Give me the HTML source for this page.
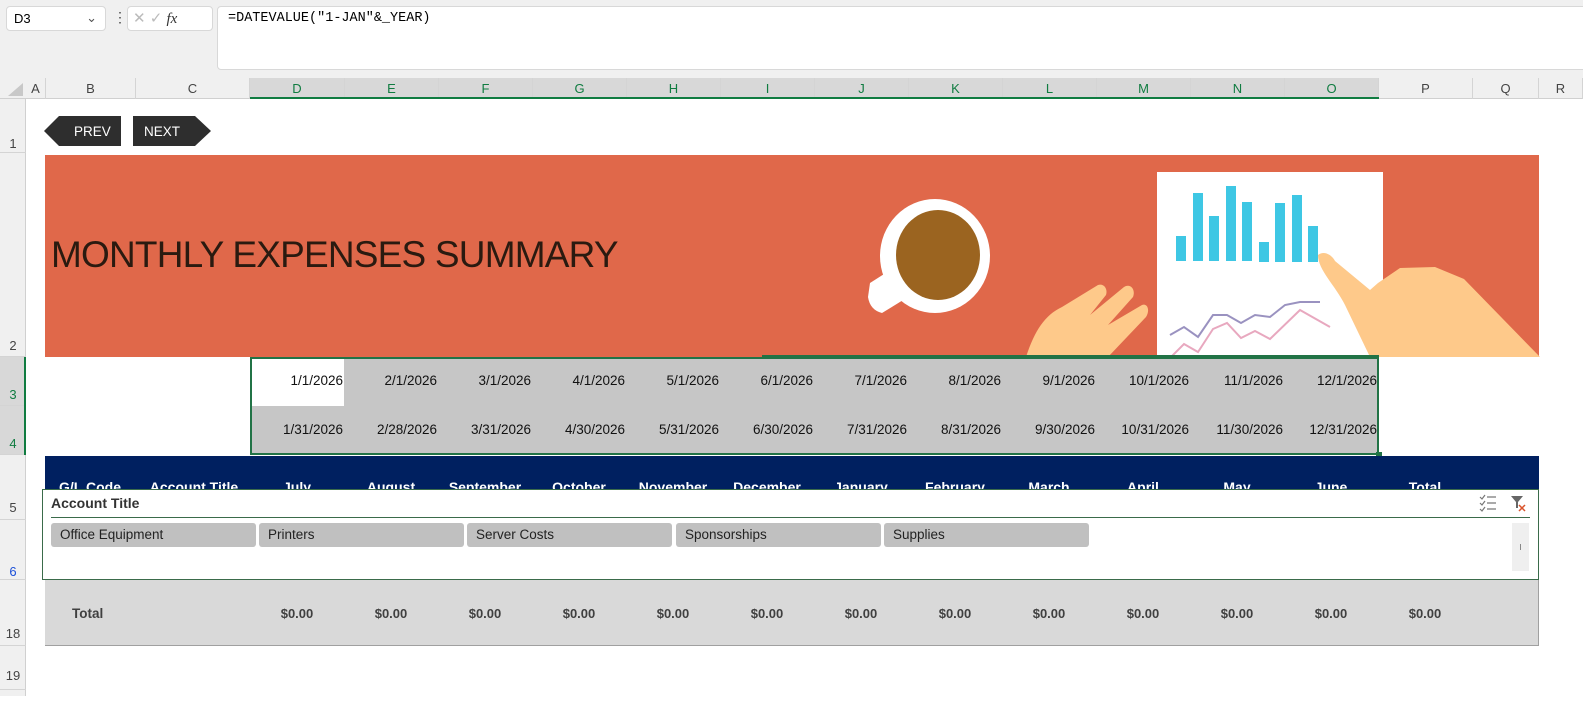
<!DOCTYPE html>
<html><head><style>
*{margin:0;padding:0;box-sizing:border-box}
body{width:1583px;height:696px;overflow:hidden;background:#fff;font-family:"Liberation Sans",sans-serif;position:relative}
.a{position:absolute}
.ch{position:absolute;top:78px;height:21px;font-size:13px;color:#444;text-align:center;line-height:21px;border-right:1px solid #d4d4d4}
.rh{position:absolute;left:0;width:26px;font-size:13px;color:#444;text-align:center;border-bottom:1px solid #d4d4d4}
.dt{position:absolute;font-size:13.5px;color:#111;text-align:right;width:94px}
.mh{position:absolute;top:479px;font-size:14px;font-weight:bold;color:#fff;text-align:center;width:94px}
.tv{position:absolute;top:606px;font-size:13px;font-weight:bold;color:#404040;text-align:center;width:94px}
.btn{position:absolute;top:523px;height:24px;width:205px;background:#c0c0c0;border-radius:3px;font-size:13.5px;color:#222;padding:4px 9px}
</style></head><body>
<div class="a" style="left:0;top:0;width:1583px;height:78px;background:#f0f0f0"></div>
<div class="a" style="left:6px;top:6px;width:100px;height:25px;background:#fff;border:1px solid #d8d8d8;border-radius:4px;font-size:13px;padding:4px 7px">D3<span style="position:absolute;right:8px;top:3px;color:#555">&#8964;</span></div>
<div class="a" style="left:113px;top:9px;font-size:14px;color:#444">&#8942;</div>
<div class="a" style="left:127px;top:6px;width:86px;height:25px;background:#fff;border:1px solid #d8d8d8;border-radius:4px;font-size:15px;color:#bbb;padding:2px 5px">✕ ✓ <i style="color:#333;font-family:'Liberation Serif',serif">fx</i></div>
<div class="a" style="left:217px;top:6px;width:1380px;height:64px;background:#fff;border:1px solid #d8d8d8;border-radius:4px;font-family:'Liberation Mono',monospace;font-size:13.5px;padding:4px 10px">=DATEVALUE("1-JAN"&amp;_YEAR)</div>
<div class="a" style="left:0;top:78px;width:1583px;height:21px;background:#f0f0f0;border-bottom:1px solid #d0d0d0"></div>
<div class="a" style="left:8px;top:83px;width:0;height:0;border-left:15px solid transparent;border-bottom:13px solid #c8c8c8"></div>
<div class="ch" style="left:26px;width:20px">A</div>
<div class="ch" style="left:46px;width:90px">B</div>
<div class="ch" style="left:136px;width:114px">C</div>
<div class="ch" style="left:250px;width:95px;background:#d8d8d8;color:#107c41">D</div>
<div class="ch" style="left:345px;width:94px;background:#d8d8d8;color:#107c41">E</div>
<div class="ch" style="left:439px;width:94px;background:#d8d8d8;color:#107c41">F</div>
<div class="ch" style="left:533px;width:94px;background:#d8d8d8;color:#107c41">G</div>
<div class="ch" style="left:627px;width:94px;background:#d8d8d8;color:#107c41">H</div>
<div class="ch" style="left:721px;width:94px;background:#d8d8d8;color:#107c41">I</div>
<div class="ch" style="left:815px;width:94px;background:#d8d8d8;color:#107c41">J</div>
<div class="ch" style="left:909px;width:94px;background:#d8d8d8;color:#107c41">K</div>
<div class="ch" style="left:1003px;width:94px;background:#d8d8d8;color:#107c41">L</div>
<div class="ch" style="left:1097px;width:94px;background:#d8d8d8;color:#107c41">M</div>
<div class="ch" style="left:1191px;width:94px;background:#d8d8d8;color:#107c41">N</div>
<div class="ch" style="left:1285px;width:94px;background:#d8d8d8;color:#107c41">O</div>
<div class="ch" style="left:1379px;width:94px">P</div>
<div class="ch" style="left:1473px;width:66px">Q</div>
<div class="ch" style="left:1539px;width:44px">R</div>
<div class="a" style="left:250px;top:97px;width:1129px;height:2px;background:#107c41"></div>
<div class="a" style="left:0;top:99px;width:26px;height:597px;background:#f0f0f0;border-right:1px solid #d0d0d0"></div>
<div class="rh" style="top:99px;height:54px;line-height:90px">1</div>
<div class="rh" style="top:153px;height:204px;line-height:385px">2</div>
<div class="rh" style="top:357px;height:49px;line-height:75px;background:#d8d8d8;color:#107c41">3</div>
<div class="rh" style="top:406px;height:49px;line-height:75px;background:#d8d8d8;color:#107c41">4</div>
<div class="a" style="left:24px;top:357px;width:2px;height:98px;background:#107c41"></div>
<div class="rh" style="top:455px;height:65px;line-height:105px">5</div>
<div class="rh" style="top:520px;height:60px;line-height:104px;color:#1a4fd8">6</div>
<div class="rh" style="top:580px;height:66px;line-height:108px">18</div>
<div class="rh" style="top:646px;height:44px;line-height:60px">19</div>

<svg class="a" style="left:44px;top:116px" width="170" height="30"><polygon points="0,15 15,0 77,0 77,30 15,30" fill="#2e2e2e"/><polygon points="89,0 151,0 167,15 151,30 89,30" fill="#2e2e2e"/><text x="30" y="20" fill="#fff" font-size="13.5" font-family="Liberation Sans">PREV</text><text x="100" y="20" fill="#fff" font-size="13.5" font-family="Liberation Sans">NEXT</text></svg>

<div class="a" style="left:45px;top:155px;width:1494px;height:202px;background:#e0684a"></div>
<div class="a" style="left:51px;top:234px;font-size:37px;color:#2a1a10;letter-spacing:-0.8px">MONTHLY EXPENSES SUMMARY</div>
<svg class="a" style="left:840px;top:155px" width="700" height="202">
<path d="M30,128 L55,112 L68,142 L42,158 Q30,155 28,142 Z" fill="#fff"/>
<ellipse cx="95" cy="101" rx="55" ry="57" fill="#fff"/>
<ellipse cx="98" cy="100" rx="42" ry="45" fill="#9b6420"/>
<rect x="317" y="17" width="226" height="187" fill="#fff"/>
<g fill="#3ec7e4"><rect x="336" y="81" width="10" height="25"/><rect x="353" y="38" width="10" height="68"/><rect x="369" y="61" width="10" height="45"/><rect x="386" y="31" width="10" height="75"/><rect x="402" y="47" width="10" height="59"/><rect x="419" y="87" width="10" height="20"/><rect x="435" y="48" width="10" height="59"/><rect x="452" y="40" width="10" height="67"/><rect x="468" y="71" width="10" height="36"/></g>
<polyline points="330,180 344,172 358,182 373,160 387,160 401,168 415,160 430,162 445,150 460,147 480,147" fill="none" stroke="#9a92c0" stroke-width="2"/>
<polyline points="330,203 344,189 358,197 373,174 387,168 401,183 415,176 430,184 460,155 490,172" fill="none" stroke="#e8a8bf" stroke-width="2"/>
<path d="M186,202 C195,175 205,160 222,152 L258,130 C264,128 268,134 266,140 L250,160 L284,132 C290,128 296,134 293,142 L268,170 L302,150 C308,148 310,156 306,162 L268,202 Z" fill="#fec98a"/>
<path d="M478,100 C484,95 492,100 495,106 L530,135 L538,128 L560,113 L595,112 L624,124 L700,202 L530,202 L505,150 C495,130 478,115 478,100 Z" fill="#fec98a"/>
</svg>

<div class="a" style="left:250px;top:357px;width:1129px;height:98px;background:#c6c6c6;border:2px solid #217346"></div>
<div class="a" style="left:252px;top:359px;width:92px;height:47px;background:#fff"></div>
<div class="a" style="left:762px;top:355px;width:617px;height:2px;background:#217346"></div>
<div class="a" style="left:1376px;top:452px;width:6px;height:6px;background:#217346"></div>
<div class="dt" style="left:249px;top:373px">1/1/2026</div><div class="dt" style="left:343px;top:373px">2/1/2026</div><div class="dt" style="left:437px;top:373px">3/1/2026</div><div class="dt" style="left:531px;top:373px">4/1/2026</div><div class="dt" style="left:625px;top:373px">5/1/2026</div><div class="dt" style="left:719px;top:373px">6/1/2026</div><div class="dt" style="left:813px;top:373px">7/1/2026</div><div class="dt" style="left:907px;top:373px">8/1/2026</div><div class="dt" style="left:1001px;top:373px">9/1/2026</div><div class="dt" style="left:1095px;top:373px">10/1/2026</div><div class="dt" style="left:1189px;top:373px">11/1/2026</div><div class="dt" style="left:1283px;top:373px">12/1/2026</div>
<div class="dt" style="left:249px;top:422px">1/31/2026</div><div class="dt" style="left:343px;top:422px">2/28/2026</div><div class="dt" style="left:437px;top:422px">3/31/2026</div><div class="dt" style="left:531px;top:422px">4/30/2026</div><div class="dt" style="left:625px;top:422px">5/31/2026</div><div class="dt" style="left:719px;top:422px">6/30/2026</div><div class="dt" style="left:813px;top:422px">7/31/2026</div><div class="dt" style="left:907px;top:422px">8/31/2026</div><div class="dt" style="left:1001px;top:422px">9/30/2026</div><div class="dt" style="left:1095px;top:422px">10/31/2026</div><div class="dt" style="left:1189px;top:422px">11/30/2026</div><div class="dt" style="left:1283px;top:422px">12/31/2026</div>

<div class="a" style="left:45px;top:456px;width:1494px;height:34px;background:#002060"></div>
<div class="a" style="left:45px;top:456px;width:1494px;height:33px;overflow:hidden">
<div class="mh" style="left:0;top:23px;width:90px">G/L Code</div>
<div class="mh" style="left:92px;top:23px;width:114px">Account Title</div>
<div class="mh" style="left:205px;top:23px">July</div><div class="mh" style="left:299px;top:23px">August</div><div class="mh" style="left:393px;top:23px">September</div><div class="mh" style="left:487px;top:23px">October</div><div class="mh" style="left:581px;top:23px">November</div><div class="mh" style="left:675px;top:23px">December</div><div class="mh" style="left:769px;top:23px">January</div><div class="mh" style="left:863px;top:23px">February</div><div class="mh" style="left:957px;top:23px">March</div><div class="mh" style="left:1051px;top:23px">April</div><div class="mh" style="left:1145px;top:23px">May</div><div class="mh" style="left:1239px;top:23px">June</div><div class="mh" style="left:1333px;top:23px">Total</div>
</div>

<div class="a" style="left:45px;top:580px;width:1494px;height:66px;background:#d9d9d9;border-bottom:1px solid #a0a0a0;border-right:1px solid #a0a0a0"></div>
<div class="a" style="left:72px;top:606px;font-size:13.5px;font-weight:bold;color:#404040">Total</div>
<div class="tv" style="left:250px">$0.00</div><div class="tv" style="left:344px">$0.00</div><div class="tv" style="left:438px">$0.00</div><div class="tv" style="left:532px">$0.00</div><div class="tv" style="left:626px">$0.00</div><div class="tv" style="left:720px">$0.00</div><div class="tv" style="left:814px">$0.00</div><div class="tv" style="left:908px">$0.00</div><div class="tv" style="left:1002px">$0.00</div><div class="tv" style="left:1096px">$0.00</div><div class="tv" style="left:1190px">$0.00</div><div class="tv" style="left:1284px">$0.00</div><div class="tv" style="left:1378px">$0.00</div>

<div class="a" style="left:42px;top:489px;width:1497px;height:91px;background:#fff;border:1px solid #3a6b4a"></div>
<div class="a" style="left:51px;top:495px;font-size:14px;font-weight:bold;color:#333">Account Title</div>
<div class="a" style="left:51px;top:517px;width:1479px;height:1px;background:#3a6b4a"></div>
<svg class="a" style="left:1479px;top:494px" width="20" height="18"><path d="M1,3 L3,5 L6,1 M1,9 L3,11 L6,7 M1,15 L3,17 L6,13" stroke="#777" fill="none" stroke-width="1.2"/><path d="M8,3 H17 M8,9 H17 M8,15 H17" stroke="#777" stroke-width="1.2"/></svg>
<svg class="a" style="left:1510px;top:495px" width="18" height="18"><path d="M1,1 H13 L8,7 V13 H6 V7 Z" fill="#666"/><path d="M9,10 L15,16 M15,10 L9,16" stroke="#d9542c" stroke-width="1.5"/></svg>
<div class="btn" style="left:51px">Office Equipment</div>
<div class="btn" style="left:259px">Printers</div>
<div class="btn" style="left:467px">Server Costs</div>
<div class="btn" style="left:676px">Sponsorships</div>
<div class="btn" style="left:884px">Supplies</div>
<div class="a" style="left:1512px;top:523px;width:17px;height:48px;background:#efefef"></div>
<div class="a" style="left:1520px;top:544px;width:1px;height:6px;background:#888"></div>
</body></html>
